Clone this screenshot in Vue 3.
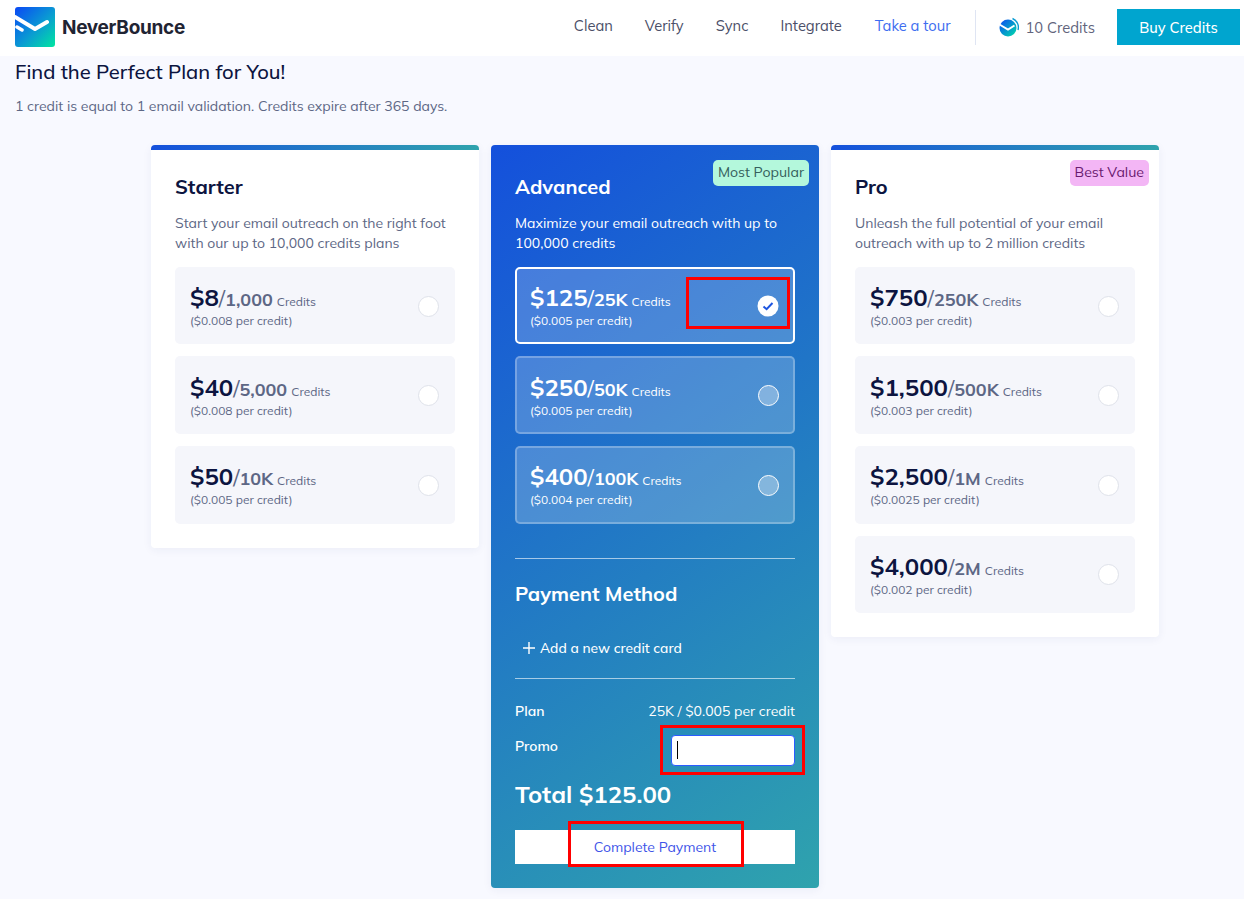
<script setup>
const starter = [
  { p: '$8', q: '1,000', r: '($0.008 per credit)' },
  { p: '$40', q: '5,000', r: '($0.008 per credit)' },
  { p: '$50', q: '10K', r: '($0.005 per credit)' },
]
const advanced = [
  { p: '$125', q: '25K', r: '($0.005 per credit)', on: true },
  { p: '$250', q: '50K', r: '($0.005 per credit)' },
  { p: '$400', q: '100K', r: '($0.004 per credit)' },
]
const pro = [
  { p: '$750', q: '250K', r: '($0.003 per credit)' },
  { p: '$1,500', q: '500K', r: '($0.003 per credit)' },
  { p: '$2,500', q: '1M', r: '($0.0025 per credit)' },
  { p: '$4,000', q: '2M', r: '($0.002 per credit)' },
]
</script>

<template>
  <div class="page">
    <header class="top">
      <div class="brand">
        <svg width="40" height="40" viewBox="0 0 40 40">
          <defs>
            <linearGradient id="lg" x1="0" y1="0" x2="1" y2="1">
              <stop offset="0" stop-color="#0a48f5" />
              <stop offset="0.55" stop-color="#0a9cd2" />
              <stop offset="1" stop-color="#00e6a0" />
            </linearGradient>
          </defs>
          <rect width="40" height="40" rx="3" fill="url(#lg)" />
          <path d="M0 10 L20 22 L32 15" fill="none" stroke="#fff" stroke-width="4" stroke-linejoin="round" stroke-linecap="round" />
          <path d="M2 20 L7 23" fill="none" stroke="#fff" stroke-width="3.5" stroke-linecap="round" />
        </svg>
        <span class="brand-name">NeverBounce</span>
      </div>
      <nav class="nav">
        <span>Clean</span><span>Verify</span><span>Sync</span><span>Integrate</span>
        <span class="tour">Take a tour</span>
      </nav>
      <div class="sep"></div>
      <div class="credits">
        <svg width="20" height="20" viewBox="0 0 20 20">
          <defs>
            <linearGradient id="lg2" x1="0" y1="0" x2="1" y2="1">
              <stop offset="0" stop-color="#0a48f5" />
              <stop offset="1" stop-color="#00e0a8" />
            </linearGradient>
          </defs>
          <circle cx="9" cy="11" r="8.5" fill="url(#lg2)" />
          <path d="M0.5 7.5 L9 12.5 L15.5 8.5" fill="none" stroke="#fff" stroke-width="2" />
          <path d="M13.5 1.5 A9.5 9.5 0 0 1 19 13" fill="none" stroke="#0a9cd2" stroke-width="1.4" />
        </svg>
        <span>10 Credits</span>
      </div>
      <button class="buy">Buy Credits</button>
    </header>

    <div class="intro">
      <h1>Find the Perfect Plan for You!</h1>
      <p>1 credit is equal to 1 email validation. Credits expire after 365 days.</p>
    </div>

    <main class="grid">
      <section class="card">
        <h2>Starter</h2>
        <p class="desc">Start your email outreach on the right foot with our up to 10,000 credits plans</p>
        <div v-for="x in starter" :key="x.p" class="plan">
          <div>
            <div class="line"><b class="price">{{ x.p }}</b><span class="slash">/</span><b class="qty">{{ x.q }}</b><span class="cr">Credits</span></div>
            <div class="rate">{{ x.r }}</div>
          </div>
          <span class="radio"></span>
        </div>
      </section>

      <section class="card adv">
        <span class="badge green">Most Popular</span>
        <h2>Advanced</h2>
        <p class="desc">Maximize your email outreach with up to 100,000 credits</p>
        <div v-for="x in advanced" :key="x.p" class="plan" :class="{ on: x.on }">
          <div>
            <div class="line"><b class="price">{{ x.p }}</b><span class="slash">/</span><b class="qty">{{ x.q }}</b><span class="cr">Credits</span></div>
            <div class="rate">{{ x.r }}</div>
          </div>
          <span class="radio" :class="{ checked: x.on }">
            <svg v-if="x.on" width="22" height="22" viewBox="0 0 22 22"><circle cx="11" cy="11" r="10.5" fill="#fff" /><path d="M6.5 11.5 L9.6 14.2 L15.5 8" fill="none" stroke="#1d55e0" stroke-width="2" /></svg>
          </span>
          <span v-if="x.on" class="mark mark-plan"></span>
        </div>
        <hr class="rule first" />
        <h2 class="pm">Payment Method</h2>
        <div class="add">
          <svg width="12" height="12" viewBox="0 0 12 12"><path d="M6 0 V12 M0 6 H12" stroke="#fff" stroke-width="1.4" fill="none" /></svg>
          <span>Add a new credit card</span>
        </div>
        <hr class="rule" />
        <div class="row"><b>Plan</b><span>25K / $0.005 per credit</span></div>
        <div class="row promo">
          <b>Promo</b>
          <div class="field"><i class="caret"></i><span class="mark mark-promo"></span></div>
        </div>
        <div class="total">Total $125.00</div>
        <div class="pay"><span>Complete Payment</span><span class="mark mark-pay"></span></div>
      </section>

      <section class="card">
        <span class="badge pink">Best Value</span>
        <h2>Pro</h2>
        <p class="desc">Unleash the full potential of your email outreach with up to 2 million credits</p>
        <div v-for="x in pro" :key="x.p" class="plan">
          <div>
            <div class="line"><b class="price">{{ x.p }}</b><span class="slash">/</span><b class="qty">{{ x.q }}</b><span class="cr">Credits</span></div>
            <div class="rate">{{ x.r }}</div>
          </div>
          <span class="radio"></span>
        </div>
      </section>
    </main>
  </div>
</template>

<style>
html, body { background: #f8f9ff; }
</style>

<style scoped>
.page { width: 1244px; height: 899px; overflow: hidden; background: #f8f9ff; font-family: Mulish, Nunito, "Open Sans", sans-serif; color: #0c1440; }
.top { height: 56px; box-sizing: border-box; background: #fff; display: flex; align-items: center; padding: 0 4px 2px 15px; }
.brand { display: flex; align-items: center; gap: 7px; margin-right: auto; }
.brand-name { font-size: 19px; font-weight: 700; color: #1f2433; font-family: Inter, sans-serif; letter-spacing: -0.3px; }
.nav { display: flex; gap: 32px; font-size: 14.7px; color: #4b4f68; margin-top: -4px; }
.tour { color: #3d6df0; margin-left: 1px; }
.sep { width: 1px; height: 35px; background: #dfe5f3; margin: 0 23px 0 24px; }
.credits { display: flex; align-items: center; gap: 7px; font-size: 14.7px; color: #62647c; margin-right: 22px; }
.buy { width: 123px; height: 36px; border: 0; background: #00a5cf; color: #fff; font: inherit; font-size: 14.7px; font-weight: 500; }
.intro { padding: 4px 15px 0; }
.intro h1 { margin: 0; font-size: 20.16px; font-weight: 500; line-height: 24px; color: #0c1440; }
.intro p { margin: 12px 0 0; font-size: 14px; line-height: 20px; color: #5d6785; }
.grid { display: flex; gap: 12px; align-items: flex-start; padding-left: 151px; margin-top: 29px; }
.card { position: relative; overflow: hidden; width: 328px; box-sizing: border-box; background: #fff; padding: 29px 24px 24px; border-radius: 4px; box-shadow: 0 2px 10px rgba(30, 50, 120, .06); }
.card::before { content: ""; position: absolute; left: 0; right: 0; top: 0; height: 5px; background: linear-gradient(90deg, #1450dc, #2fa3ad); }
.card h2 { margin: 0; font-size: 20px; line-height: 26px; font-weight: 700; color: #0c1440; }
.desc { margin: 13px 0 13.8px; font-size: 14px; line-height: 20px; color: #5d6785; }
.plan { position: relative; height: 77.6px; box-sizing: border-box; background: #f5f6fb; border-radius: 5px; margin-bottom: 12px; padding: 1px 16px 0 15px; display: flex; align-items: center; justify-content: space-between; }
.plan:last-of-type { margin-bottom: 0; }
.line { display: flex; align-items: baseline; height: 26px; line-height: 26px; }
.price { font-size: 24px; line-height: 26px; font-weight: 700; color: #0c1440; }
.slash { font-size: 22px; font-weight: 400; color: #5d6785; }
.qty { font-size: 18px; font-weight: 700; color: #5d6785; }
.cr { font-size: 12px; color: #5d6785; margin-left: 4px; }
.rate { font-size: 12px; line-height: 14px; margin-top: 4px; color: #5d6785; }
.radio { width: 21px; height: 21px; box-sizing: border-box; border-radius: 50%; background: #fff; border: 1px solid #dfe2ea; }
.adv { height: 743px; color: #fff; background: linear-gradient(145deg, #1450dc 0%, #2fa3ad 100%); }
.adv::before { display: none; }
.adv h2, .adv .desc, .adv .price, .adv .slash, .adv .qty, .adv .cr, .adv .rate { color: #fff; }
.adv .plan { background: rgba(255, 255, 255, .2); border: 2px solid rgba(255, 255, 255, .25); padding: 1px 14px 0 13px; margin-bottom: 12px; }
.adv .plan.on { border-color: #fff; }
.adv .radio { background: rgba(255, 255, 255, .3); border-color: #fff; }
.adv .radio.checked { width: 22px; height: 22px; border: 0; background: none; }
.mark { position: absolute; border: 3px solid #f00; box-sizing: border-box; pointer-events: none; }
.mark-plan { left: 169px; top: 8px; width: 104px; height: 52px; }
.rule { border: 0; border-top: 1px solid rgba(255, 255, 255, .6); margin: 0; }
.rule.first { margin-top: 34.4px; }
.card .pm { margin-top: 22px; }
.add { margin: 31px 0 20px 8px; font-size: 13.8px; font-weight: 500; line-height: 20px; display: flex; align-items: center; gap: 5px; }
.row { display: flex; justify-content: space-between; font-size: 14px; line-height: 20px; margin-top: 22px; }
.row b { font-weight: 600; }
.promo { margin-top: 15px; height: 31px; align-items: flex-start; }
.field { position: relative; width: 124px; height: 31px; background: #fff; border: 1px solid #2b5cff; border-radius: 4px; display: flex; align-items: center; padding-left: 5px; box-sizing: border-box; margin-top: -1px; }
.caret { width: 1px; height: 18px; background: #000; }
.mark-promo { left: -12px; top: -11px; width: 145px; height: 50px; }
.total { font-size: 24px; font-weight: 700; line-height: 30px; margin-top: 12px; }
.pay { position: relative; height: 34px; background: #fff; margin-top: 21px; display: flex; align-items: center; justify-content: center; color: #3f55e8; font-size: 14px; }
.mark-pay { left: 53px; top: -9px; width: 176px; height: 46px; }
.badge { position: absolute; top: 15px; right: 10px; height: 26px; padding: 0 5px 2px; box-sizing: border-box; display: flex; align-items: center; border-radius: 5px; font-size: 14.1px; z-index: 1; }
.green { background: #b4f8dc; color: #35605c; }
.pink { background: #f3b6f5; color: #6a1a70; }
</style>
